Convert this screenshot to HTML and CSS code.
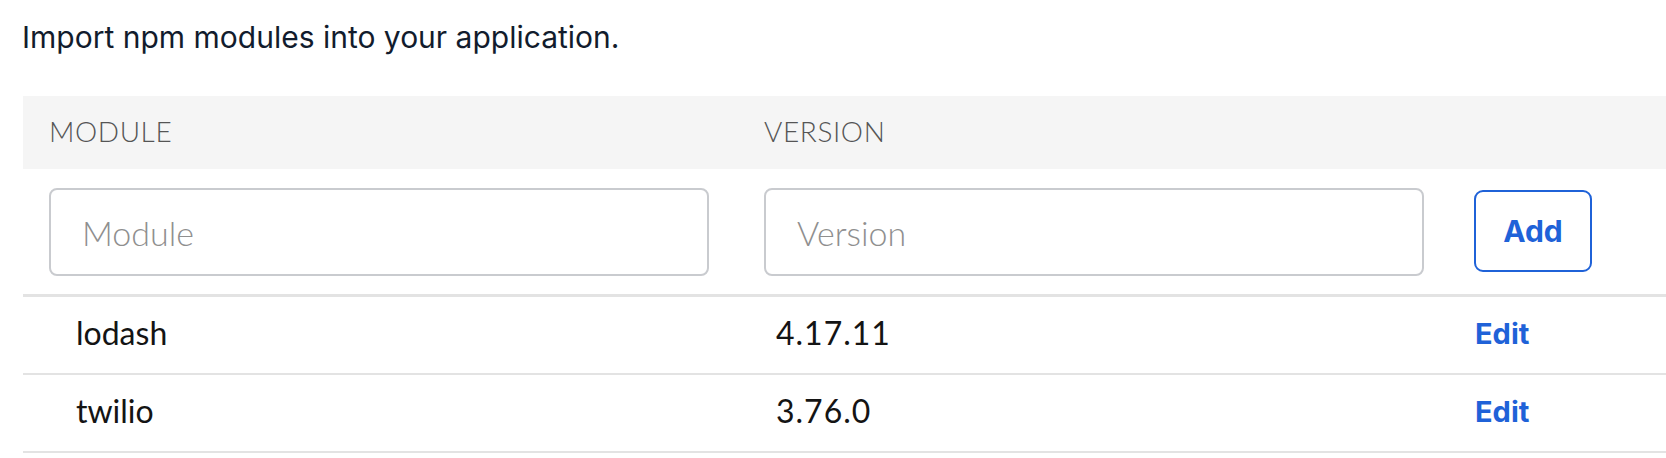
FILE: index.html
```html
<!DOCTYPE html>
<html lang="en">
<head>
<meta charset="utf-8">
<title>Modules</title>
<link rel="stylesheet" href="styles.css">
</head>
<body>
<div class="page">
  <p class="intro">Import npm modules into your application.</p>
  <div class="table">
    <div class="row head-row">
      <div class="th">Module</div>
      <div class="th">Version</div>
      <div class="th"></div>
    </div>
    <div class="row form-row">
      <div class="cell"><input class="field" type="text" placeholder="Module"></div>
      <div class="cell"><input class="field" type="text" placeholder="Version"></div>
      <div class="cell"><button class="btn-add" type="button">Add</button></div>
    </div>
    <div class="row data-row">
      <div class="td td-name">lodash</div>
      <div class="td td-version">4.17.11</div>
      <div class="td td-action"><a class="link-edit" href="#">Edit</a></div>
    </div>
    <div class="row data-row">
      <div class="td td-name">twilio</div>
      <div class="td td-version">3.76.0</div>
      <div class="td td-action"><a class="link-edit" href="#">Edit</a></div>
    </div>
  </div>
</div>
</body>
</html>
```

FILE: styles.css
```css
* { box-sizing: border-box; }

html, body {
  margin: 0;
  padding: 0;
  background: #ffffff;
}

.page {
  padding: 19px 0 0 23px;
}

.intro {
  margin: 0 0 41px -1px;
  font-family: "Inter", "Liberation Sans", sans-serif;
  font-size: 30px;
  line-height: 36px;
  color: #121c2d;
}

.table {
  display: flex;
  flex-direction: column;
}

.row {
  display: grid;
  grid-template-columns: 715px 710px 1fr;
}

.head-row {
  height: 73px;
  background: #f5f5f5;
  align-items: center;
}

.th {
  padding-left: 26px;
  padding-bottom: 4px;
  font-family: "Lato", "Open Sans", sans-serif;
  font-weight: 300;
  font-size: 28px;
  line-height: 34px;
  letter-spacing: 0.6px;
  text-transform: uppercase;
  color: #555555;
}

.form-row {
  padding: 19px 0 18px;
  border-bottom: 3px solid #e3e3e3;
  align-items: center;
}

.cell {
  padding-left: 26px;
  display: flex;
  align-items: center;
}

.field {
  width: 660px;
  height: 88px;
  margin: 0;
  padding: 0 0 0 31px;
  border: 2px solid #c9cbcf;
  border-radius: 8px;
  font-family: "Lato", "Open Sans", sans-serif;
  font-weight: 300;
  font-size: 34px;
  color: #121c2d;
  background: #fff;
  outline: none;
}

.field::placeholder {
  color: #8f8f8f;
}

.btn-add {
  width: 118px;
  height: 82px;
  margin: 0 0 3px;
  padding: 0;
  border: 2px solid #1f62d8;
  border-radius: 9px;
  background: #fff;
  font-family: "Inter", "Liberation Sans", sans-serif;
  font-weight: 700;
  font-size: 30px;
  color: #1f62d8;
  cursor: pointer;
}

.data-row {
  height: 78px;
  border-bottom: 2px solid #e3e3e3;
  align-items: center;
}

.td {
  padding-bottom: 4px;
  font-family: "Lato", "Open Sans", sans-serif;
  font-size: 32px;
  line-height: 38px;
  color: #141414;
}

.td-name {
  padding-left: 53px;
}

.td-version {
  padding-left: 38px;
  letter-spacing: 1px;
}

.td-action {
  padding-left: 27px;
  padding-bottom: 4px;
}

.link-edit {
  font-family: "Inter", "Liberation Sans", sans-serif;
  font-weight: 700;
  font-size: 29px;
  color: #1f62d8;
  text-decoration: none;
}
```
